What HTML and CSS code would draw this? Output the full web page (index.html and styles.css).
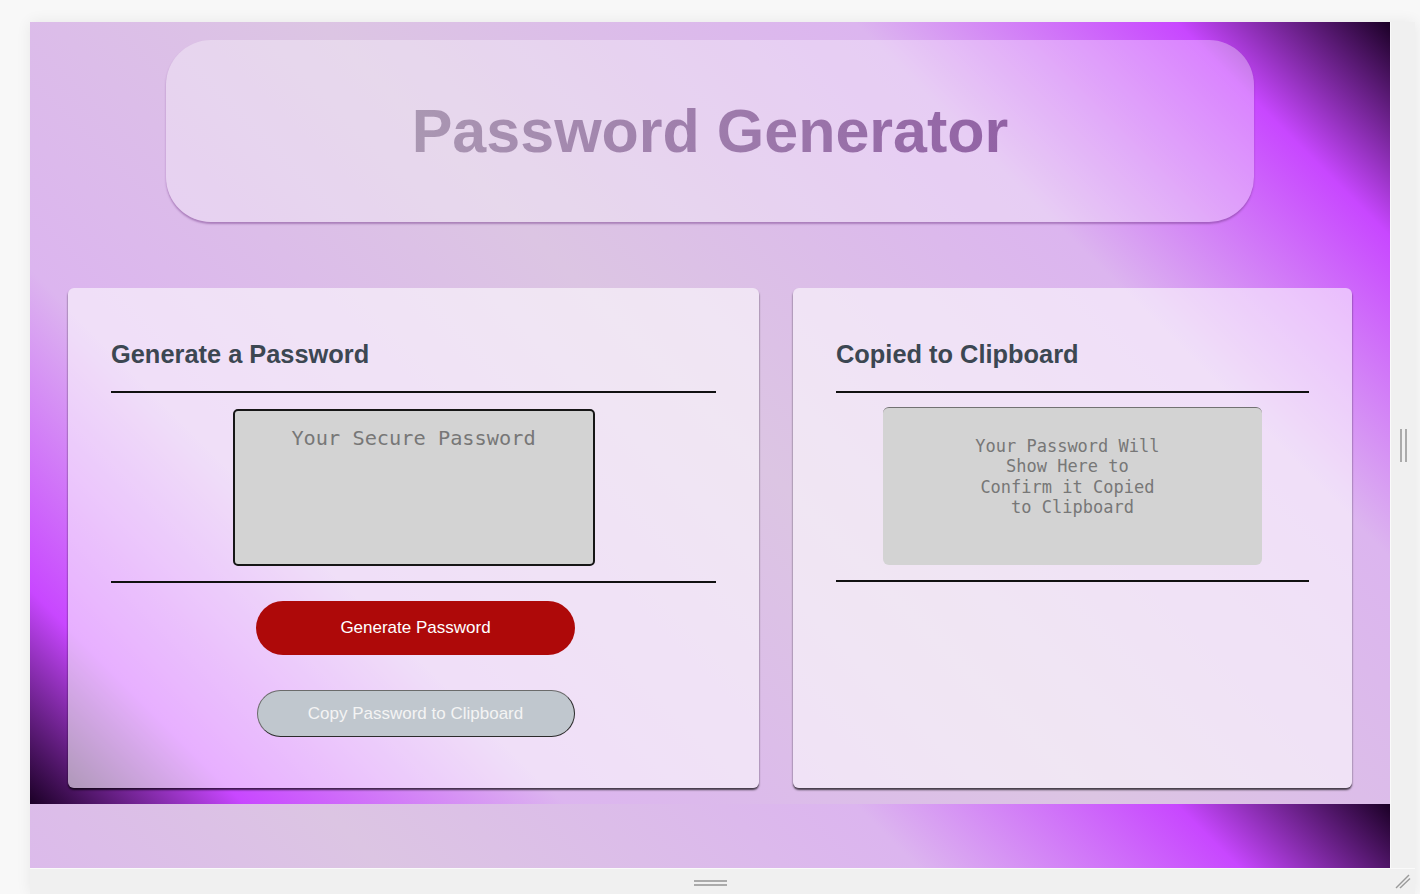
FILE: index.html
```html
<!DOCTYPE html>
<html lang="en">
<head>
<meta charset="utf-8">
<title>Password Generator</title>
<link rel="stylesheet" href="styles.css">
</head>
<body>
<div class="shell">
  <div class="stage">
    <div class="viewport">
      <main class="page">
        <header class="hero">
          <h1 class="title">Password Generator</h1>
        </header>
        <section class="cards">
          <div class="card">
            <h2 class="card-title">Generate a Password</h2>
            <hr class="rule rule-top">
            <textarea class="pw-box" placeholder="Your Secure Password" readonly></textarea>
            <hr class="rule rule-after">
            <button class="btn btn-generate" type="button">Generate Password</button>
            <button class="btn btn-copy" type="button">Copy Password to Clipboard</button>
          </div>
          <div class="card">
            <h2 class="card-title">Copied to Clipboard</h2>
            <hr class="rule rule-top">
            <div class="clip-box">Your Password Will&nbsp;<br>Show Here to&nbsp;<br>Confirm it Copied&nbsp;<br>to Clipboard</div>
            <hr class="rule rule-after">
          </div>
        </section>
      </main>
    </div>
    <div class="side-handle"><span></span><span></span></div>
  </div>
  <div class="bottom-bar">
    <div class="bottom-handle"><span></span><span></span></div>
    <div class="corner">
      <svg width="25" height="25" viewBox="0 0 25 25">
        <line x1="6" y1="19" x2="19" y2="6" stroke="#9a9a9a" stroke-width="1.4"/>
        <line x1="10" y1="19" x2="20" y2="9.5" stroke="#9a9a9a" stroke-width="1.4"/>
      </svg>
    </div>
  </div>
</div>
</body>
</html>
```

FILE: styles.css
```css
html, body {
  margin: 0;
  padding: 0;
}

body {
  background: #f8f8f8;
  font-family: "Liberation Sans", Arial, sans-serif;
}

.shell {
  margin: 22px 0 0 30px;
  width: 1385px;
  height: 872px;
  background: #f0f0f0;
  box-shadow: 0 0 14px rgba(0, 0, 0, 0.07);
  display: flex;
  flex-direction: column;
}

.stage {
  display: flex;
  height: 846px;
}

.viewport {
  width: 1360px;
  height: 846px;
  overflow: hidden;
  background: linear-gradient(45deg, #1b0026 0%, #c847ff 10%, #dcb5ef 25%, #dcc5e3 50%, #dcb5ef 75%, #c847ff 90%, #1b0026 100%) 0 0 / 100% 782px repeat-y;
}

.side-handle {
  width: 24px;
  border-left: 1px solid #fafafa;
  display: flex;
  justify-content: center;
  align-items: center;
  gap: 3px;
}

.side-handle span {
  width: 2px;
  height: 33px;
  background: #aaaaaa;
}

.bottom-bar {
  height: 25px;
  border-top: 1px solid #fafafa;
  display: flex;
}

.bottom-handle {
  width: 1360px;
  padding-top: 2px;
  box-sizing: border-box;
  display: flex;
  flex-direction: column;
  align-items: center;
  justify-content: center;
  gap: 2px;
}

.bottom-handle span {
  width: 33px;
  height: 2px;
  background: #aaaaaa;
}

.corner {
  width: 25px;
  height: 25px;
}

.corner svg {
  display: block;
}

/* page */
.page {
  padding: 18px 38px 0;
}

.hero {
  height: 182px;
  margin: 0 98px;
  border-radius: 45px;
  background: rgba(255, 255, 255, 0.33);
  box-shadow: 0 2px 2px rgba(110, 50, 130, 0.45);
  display: flex;
  align-items: center;
  justify-content: center;
}

.title {
  margin: 0;
  font-size: 61px;
  font-weight: 700;
  line-height: 70px;
  background: linear-gradient(90deg, #aa97b2, #9262a5);
  -webkit-background-clip: text;
  background-clip: text;
  color: transparent;
}

.cards {
  display: grid;
  grid-template-columns: 691px 559px;
  gap: 34px;
  margin-top: 66px;
}

.card {
  height: 500px;
  box-sizing: border-box;
  padding: 0 43px;
  background: rgba(255, 255, 255, 0.57);
  border-radius: 6px;
  box-shadow: 0 2px 2px rgba(0, 0, 0, 0.7);
  display: flex;
  flex-direction: column;
}

.card-title {
  margin: 52px 0 0;
  font-size: 25.4px;
  font-weight: 700;
  line-height: 29px;
  color: #3c4752;
}

.rule {
  margin: 0;
  border: 0;
  border-top: 2px solid #111111;
  height: 0;
}

.rule-top {
  margin-top: 22px;
}

.rule-after {
  margin-top: 15px;
}

.pw-box {
  align-self: center;
  margin-top: 16px;
  width: 362px;
  height: 157px;
  box-sizing: border-box;
  border: 2px solid #161616;
  border-radius: 5px;
  background: #d3d3d3;
  resize: none;
  padding: 15px 10px;
  font: 20.3px "DejaVu Sans Mono", monospace;
  text-align: center;
  outline: none;
}

.pw-box::placeholder {
  color: #777777;
}

.btn {
  align-self: center;
  font: 17px "Liberation Sans", Arial, sans-serif;
  border-radius: 30px;
  cursor: pointer;
  padding: 0;
}

.btn-generate {
  margin-top: 18px;
  margin-left: 4px;
  width: 319px;
  height: 54px;
  background: #ae0909;
  color: #ffffff;
  border: 0;
}

.btn-copy {
  margin-top: 35px;
  margin-left: 4px;
  width: 318px;
  height: 47px;
  background: #c0c7ce;
  color: #f4f4f4;
  border: 1px solid #2b2b2b;
  border-left-color: #6b6b6b;
  border-top-color: #6b6b6b;
}

.clip-box {
  align-self: center;
  margin-top: 14px;
  width: 379px;
  height: 158px;
  box-sizing: border-box;
  background: #d3d3d3;
  border-radius: 6px;
  border-top: 1px solid #727272;
  padding-top: 28px;
  font: 17px/20.4px "DejaVu Sans Mono", monospace;
  color: #777777;
  text-align: center;
}
```
